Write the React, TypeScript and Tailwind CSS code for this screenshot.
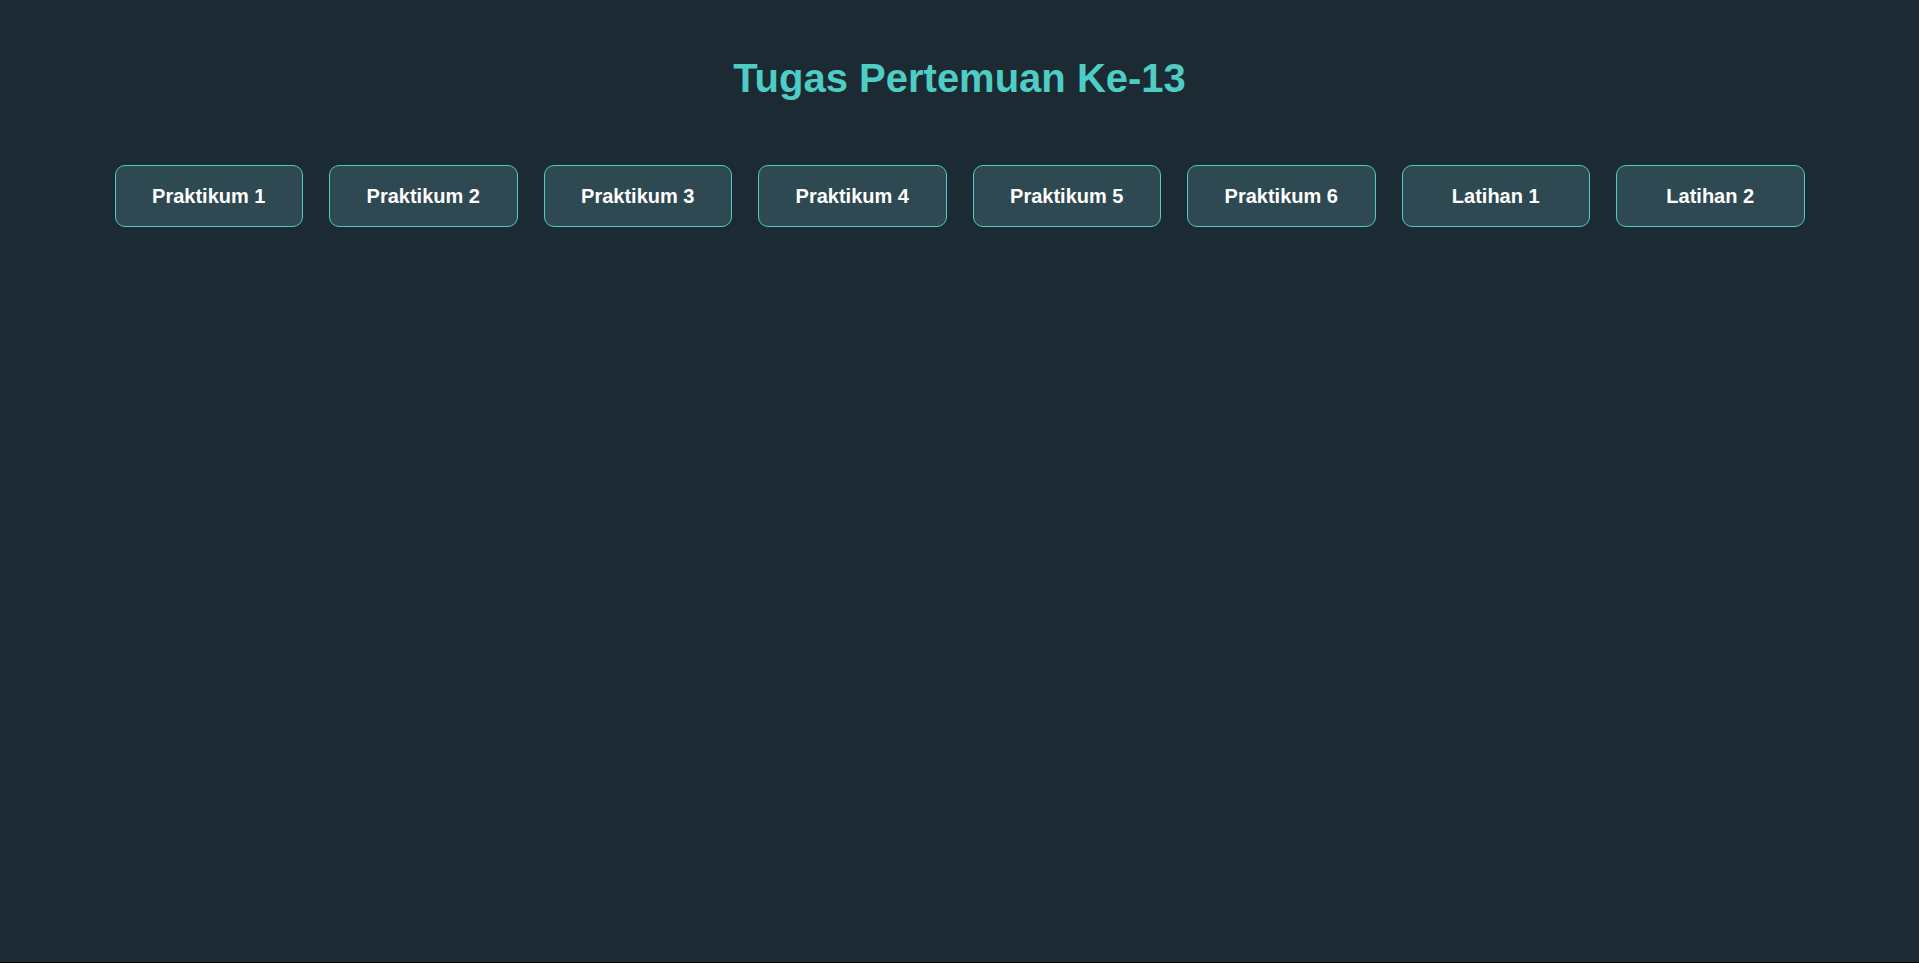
export default function App() {
  const items = [
    "Praktikum 1",
    "Praktikum 2",
    "Praktikum 3",
    "Praktikum 4",
    "Praktikum 5",
    "Praktikum 6",
    "Latihan 1",
    "Latihan 2",
  ];
  return (
    <div className="h-[963px] bg-black">
      <div
        className="h-[962px] bg-[#1b2a33] flex flex-col items-center"
        style={{ fontFamily: '"Liberation Sans", Arial, sans-serif' }}
      >
        <h1 className="mt-[55px] text-[40px] leading-[46px] font-bold text-[#4ecdc4]">
          Tugas Pertemuan Ke-13
        </h1>
        <div className="mt-[64px] flex gap-[26px]">
          {items.map((t) => (
            <button
              key={t}
              className="w-[188.5px] h-[61.5px] rounded-[10px] border border-[#4ecdc4] bg-[#2f4952] text-white text-[20px] font-bold flex items-center justify-center"
            >
              {t}
            </button>
          ))}
        </div>
      </div>
    </div>
  );
}
